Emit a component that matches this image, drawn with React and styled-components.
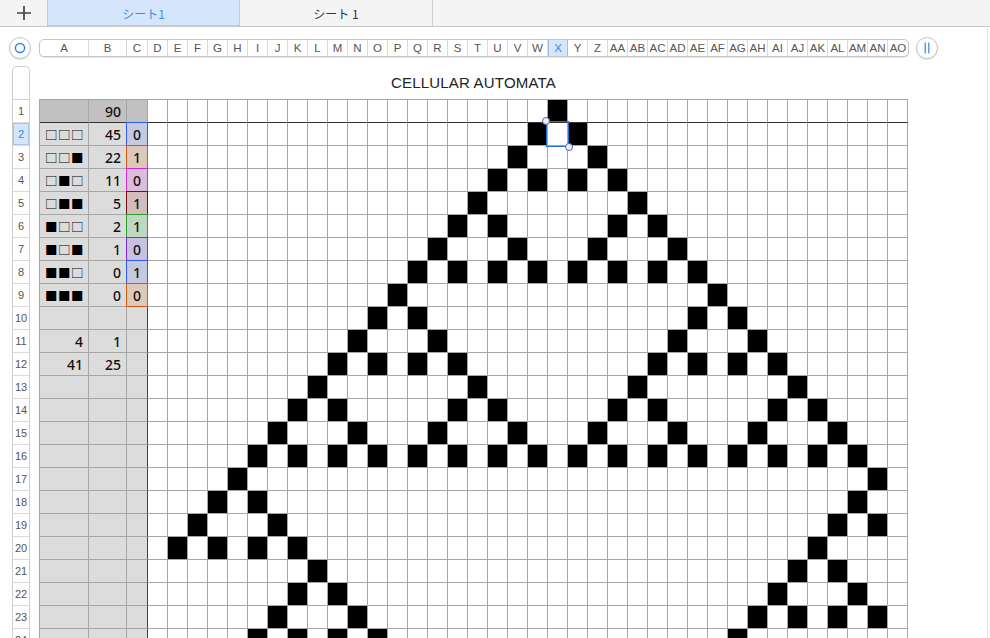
import React from "react";
import styled, { createGlobalStyle } from "styled-components";

const GlobalStyle = createGlobalStyle`
  html, body {
    margin: 0;
    padding: 0;
    height: 100%;
    overflow: hidden;
    background: #fff;
  }
  body {
    font-family: "Liberation Sans", "Noto Sans CJK JP", sans-serif;
  }
`;

// column letters A..AO
const letters = Array.from({ length: 41 }, (_, i) =>
  i < 26
    ? String.fromCharCode(65 + i)
    : "A" + String.fromCharCode(65 + i - 26)
);
const widths = [49, 38, 21, ...Array(38).fill(20)];

// rule 90, fixed zero at both edge columns
const W = 38;
const ROWS = 24;
const gens = [];
let cur = Array(W).fill(0);
cur[20] = 1;
for (let g = 0; g < ROWS; g++) {
  gens.push(cur);
  const prev = cur;
  cur = prev.map((_, i) =>
    i === 0 || i === W - 1 ? 0 : prev[i - 1] ^ prev[i + 1]
  );
}

const rules = [
  { pat: "□□□", n: 45, v: 0, bg: "#c4c9e0", bd: "#2a5ef0" },
  { pat: "□□■", n: 22, v: 1, bg: "#ddc8b9", bd: "#d05a10" },
  { pat: "□■□", n: 11, v: 0, bg: "#dcbcdc", bd: "#d22ad2" },
  { pat: "□■■", n: 5, v: 1, bg: "#d2bcbc", bd: "#7a0e0e" },
  { pat: "■□□", n: 2, v: 1, bg: "#c0d8c0", bd: "#2aa02a" },
  { pat: "■□■", n: 1, v: 0, bg: "#c9c0df", bd: "#7a2ad8" },
  { pat: "■■□", n: 0, v: 1, bg: "#c4c9e0", bd: "#2a5ef0" },
  { pat: "■■■", n: 0, v: 0, bg: "#ddc8b9", bd: "#d05a10" },
];

const Page = styled.div`
  width: 990px;
  height: 638px;
  display: flex;
  flex-direction: column;
  overflow: hidden;
`;

const TabBar = styled.div`
  height: 26px;
  flex: none;
  display: flex;
  background: #f4f4f4;
  border-bottom: 1px solid #c8c8c8;
`;

const AddTab = styled.div`
  width: 47px;
  display: flex;
  align-items: center;
  justify-content: center;
`;

const Tab = styled.div`
  box-sizing: border-box;
  width: 193px;
  display: flex;
  align-items: center;
  justify-content: center;
  font-family: "Noto Sans CJK JP", sans-serif;
  font-size: 12px;
  color: ${(p) => (p.active ? "#3a8ee8" : "#333")};
  background: ${(p) => (p.active ? "#d5e5fb" : "transparent")};
  border-left: ${(p) => (p.active ? "1px solid #b4cbee" : "none")};
  border-right: 1px solid ${(p) => (p.active ? "#b4cbee" : "#cfcfcf")};
  box-shadow: ${(p) => (p.active ? "inset 0 -1px 0 #b4cbee" : "none")};
`;

const Content = styled.div`
  flex: 1;
  display: flex;
  flex-direction: column;
  border-right: 1px solid #e4e4e4;
  width: 987px;
`;

const ColumnRow = styled.div`
  display: flex;
  align-items: center;
  height: 22px;
  margin-top: 10px;
`;

const Gutter = styled.div`
  width: 39px;
  flex: none;
  display: flex;
`;

const RoundButton = styled.div`
  width: 20px;
  height: 20px;
  border-radius: 50%;
  border: 1px solid #c6c6c6;
  box-shadow: 0 1px 1px rgba(0, 0, 0, 0.12);
  background: #fff;
  display: flex;
  align-items: center;
  justify-content: center;
  margin-left: ${(p) => p.ml || 0}px;
`;

const HeaderBar = styled.div`
  display: flex;
  height: 18px;
  box-sizing: border-box;
  border: 1px solid #c6c6c6;
  border-radius: 5px;
  box-shadow: 0 1px 1px rgba(0, 0, 0, 0.1);
  overflow: hidden;
  background: #fff;
`;

const ColLabel = styled.div`
  box-sizing: border-box;
  flex: none;
  display: flex;
  align-items: center;
  justify-content: center;
  font-size: 11.5px;
  color: ${(p) => (p.active ? "#2e8ae6" : "#555")};
  background: ${(p) => (p.active ? "#d5e5fb" : "transparent")};
  border-right: 1px solid ${(p) => (p.active ? "#9ebfe8" : "#dadada")};
  border-left: ${(p) => (p.active ? "1px solid #9ebfe8" : "none")};
  &:last-child {
    border-right: none;
  }
`;

const Body = styled.div`
  display: flex;
  margin-top: 7px;
  flex: 1;
  min-height: 0;
`;

const RowStrip = styled.div`
  margin-left: 12px;
  width: 18px;
  box-sizing: border-box;
  border: 1px solid #cdcdcd;
  border-bottom: none;
  border-radius: 5px 5px 0 0;
  background: #fff;
`;

const RowCorner = styled.div`
  height: 32px;
  border-bottom: 1px solid #d4d4d4;
`;

const RowLabel = styled.div`
  height: 22px;
  border-bottom: 1px solid #dadada;
  display: flex;
  align-items: center;
  justify-content: center;
  font-size: 11px;
  color: ${(p) => (p.active ? "#2e8ae6" : "#555")};
  background: ${(p) => (p.active ? "#d5e5fb" : "transparent")};
  box-shadow: ${(p) => (p.active ? "inset 0 0 0 1px #a9c6ec" : "none")};
`;

const Sheet = styled.div`
  display: flex;
  flex-direction: column;
`;

const Title = styled.div`
  height: 33px;
  display: flex;
  align-items: center;
  justify-content: center;
  font-size: 15px;
  letter-spacing: 0.2px;
  color: #222;
`;

const Grid = styled.div`
  display: grid;
  grid-template-columns: 49px 38px 21px repeat(38, 20px);
  grid-auto-rows: 23px;
  border-top: 1px solid #a6a6a6;
  border-left: 1px solid #a6a6a6;
  width: max-content;
`;

const Cell = styled.div`
  box-sizing: border-box;
  position: relative;
  border-right: 1px solid ${(p) => p.rightColor || "#a6a6a6"};
  border-bottom: 1px solid ${(p) => p.bottomColor || "#a6a6a6"};
  background: ${(p) => p.bg || "#fff"};
  display: flex;
  align-items: center;
  justify-content: ${(p) => p.align || "flex-end"};
  padding: 0 5px;
  font-family: "Noto Sans", sans-serif;
  font-size: 14px;
  font-weight: 500;
  color: #111;
  box-shadow: ${(p) =>
    p.frame
      ? `-1px 0 0 ${p.frame}, 0 -1px 0 ${p.frame}, -1px -1px 0 ${p.frame}`
      : "none"};
`;

const Pattern = styled.span`
  font-family: "Noto Sans CJK JP", sans-serif;
  font-size: 12.5px;
  font-weight: 400;
  letter-spacing: 0.5px;
  color: #000;
`;

const Selection = styled.div`
  position: absolute;
  top: -2px;
  left: -2px;
  right: -2px;
  bottom: -2px;
  border: 1.5px solid #1f6fd6;
  pointer-events: none;
  z-index: 2;
`;

const Handle = styled.div`
  position: absolute;
  width: 6px;
  height: 6px;
  border-radius: 50%;
  background: #eef1f8;
  border: 1px solid #4b68ad;
  ${(p) =>
    p.corner === "tl" ? "top: -5px; left: -5px;" : "bottom: -5px; right: -5px;"}
`;

const PlusIcon = () => (
  <svg width="16" height="16" viewBox="0 0 16 16">
    <path d="M8 1v14M1 8h14" stroke="#444" strokeWidth="1.7" />
  </svg>
);

const RingIcon = () => (
  <svg width="12" height="12" viewBox="0 0 12 12">
    <circle cx="6" cy="6" r="4.6" fill="none" stroke="#2e8ae6" strokeWidth="1.5" />
  </svg>
);

const PauseIcon = () => (
  <svg width="8" height="12" viewBox="0 0 8 12">
    <path d="M2.2 0.5v11M5.8 0.5v11" stroke="#2e8ae6" strokeWidth="1.2" />
  </svg>
);

const HEADER_BORDER = "#333";

function renderRow(r) {
  const cells = [];
  const rule = r >= 1 && r <= 8 ? rules[r - 1] : null;
  const isHead = r === 0;
  const fixedBg = isHead ? "#c1c1c1" : "#dcdcdc";
  const bottom = isHead ? HEADER_BORDER : undefined;

  let aText = null;
  let bText = null;
  if (isHead) bText = "90";
  if (rule) {
    aText = <Pattern>{rule.pat}</Pattern>;
    bText = rule.n;
  }
  if (r === 10) {
    aText = "4";
    bText = "1";
  }
  if (r === 11) {
    aText = "41";
    bText = "25";
  }

  cells.push(
    <Cell key="a" bg={fixedBg} bottomColor={bottom} align={rule ? "flex-start" : "flex-end"}>
      {aText}
    </Cell>
  );
  cells.push(
    <Cell key="b" bg={fixedBg} bottomColor={bottom}>
      {bText}
    </Cell>
  );
  if (rule) {
    cells.push(
      <Cell
        key="c"
        bg={rule.bg}
        align="center"
        rightColor={rule.bd}
        bottomColor={rule.bd}
        frame={rule.bd}
      >
        {rule.v}
      </Cell>
    );
  } else {
    cells.push(
      <Cell key="c" bg={fixedBg} bottomColor={bottom} rightColor={isHead ? undefined : "#444"} />
    );
  }

  gens[r].forEach((v, i) => {
    cells.push(
      <Cell key={i} bg={v ? "#000" : "#fff"} bottomColor={bottom}>
        {r === 1 && i === 20 && (
          <Selection>
            <Handle corner="tl" />
            <Handle corner="br" />
          </Selection>
        )}
      </Cell>
    );
  });
  return cells;
}

export default function App() {
  return (
    <Page>
      <GlobalStyle />
      <TabBar>
        <AddTab>
          <PlusIcon />
        </AddTab>
        <Tab active>シート1</Tab>
        <Tab>シート 1</Tab>
      </TabBar>
      <Content>
        <ColumnRow>
          <Gutter>
            <RoundButton ml={9}>
              <RingIcon />
            </RoundButton>
          </Gutter>
          <HeaderBar>
            {letters.map((l, i) => (
              <ColLabel key={l} active={l === "X"} style={{ width: widths[i] }}>
                {l}
              </ColLabel>
            ))}
          </HeaderBar>
          <RoundButton ml={7}>
            <PauseIcon />
          </RoundButton>
        </ColumnRow>
        <Body>
          <Gutter>
            <RowStrip>
              <RowCorner />
              {Array.from({ length: ROWS }, (_, i) => (
                <RowLabel key={i} active={i === 1}>
                  {i + 1}
                </RowLabel>
              ))}
            </RowStrip>
          </Gutter>
          <Sheet>
            <Title>CELLULAR AUTOMATA</Title>
            <Grid>{Array.from({ length: ROWS }, (_, r) => renderRow(r))}</Grid>
          </Sheet>
        </Body>
      </Content>
    </Page>
  );
}
